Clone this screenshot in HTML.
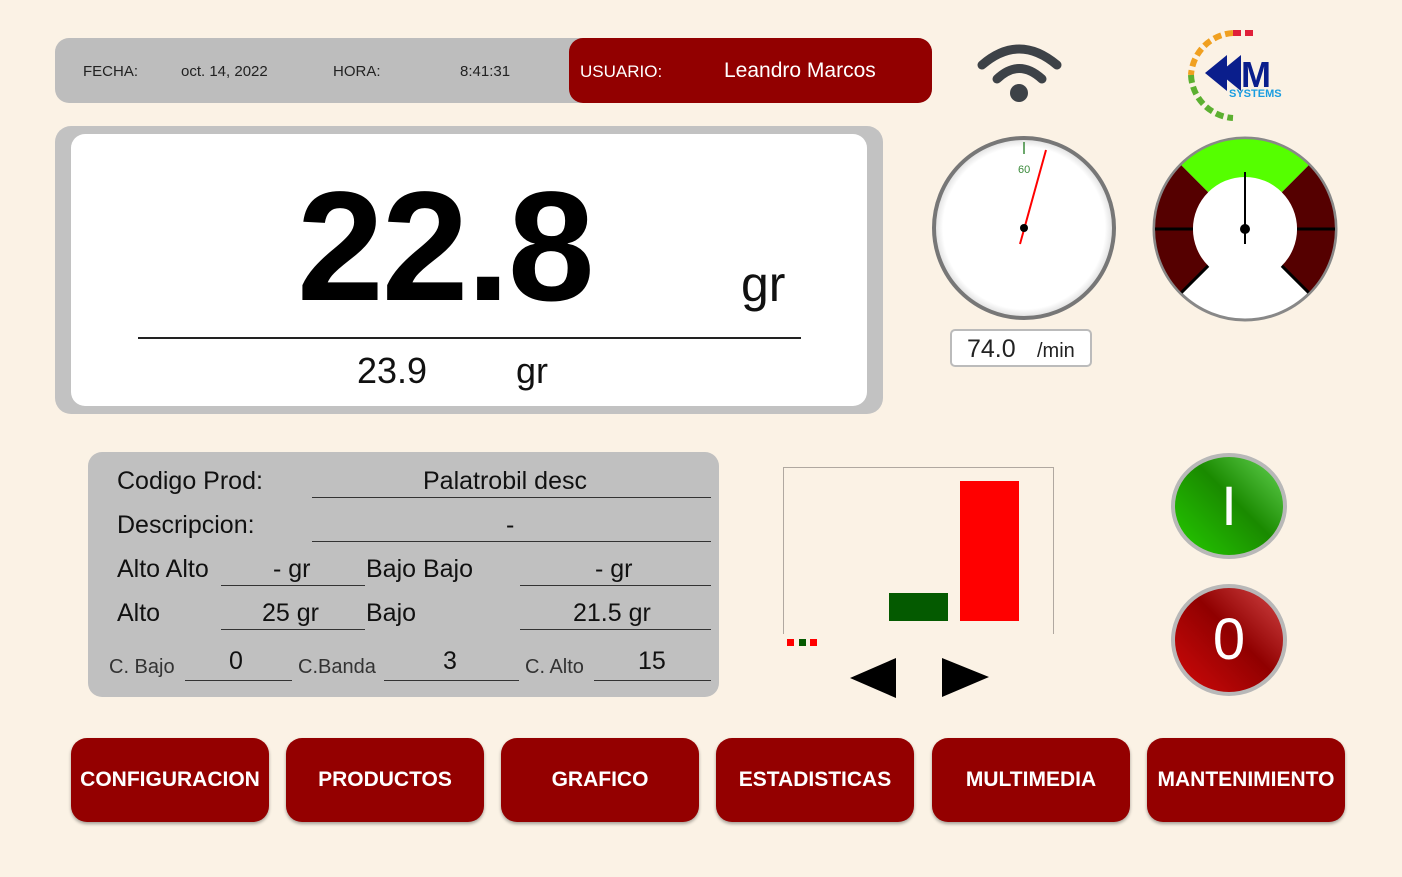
<!DOCTYPE html><html><head><style>
body{margin:0;width:1402px;height:877px;background:#fbf2e5;font-family:"Liberation Sans",Roboto,sans-serif;position:relative;overflow:hidden}
.a{position:absolute}
.btn{position:absolute;top:738px;width:198px;height:84px;background:#940000;border-radius:16px;color:#fff;font-size:21px;font-weight:bold;display:flex;align-items:center;justify-content:center;box-shadow:0 2px 3px rgba(0,0,0,.35)}
.t{position:absolute;font-size:25px;color:#111}
.l{position:absolute;height:1px;background:#333}
</style></head><body>
<div class="a" style="left:55px;top:38px;width:877px;height:65px;background:#bdbdbd;border-radius:14px"></div>
<div class="a" style="left:569px;top:38px;width:363px;height:65px;background:#920000;border-radius:14px"></div>
<div class="a" style="left:83px;top:63px;font-size:15px;color:#222">FECHA:</div>
<div class="a" style="left:181px;top:63px;font-size:15px;color:#222">oct. 14, 2022</div>
<div class="a" style="left:333px;top:63px;font-size:15px;color:#222">HORA:</div>
<div class="a" style="left:460px;top:63px;font-size:15px;color:#222">8:41:31</div>
<div class="a" style="left:580px;top:62px;font-size:17px;color:#fff">USUARIO:</div>
<div class="a" style="left:724px;top:59px;font-size:21px;color:#fff">Leandro Marcos</div>
<svg class="a" style="left:975px;top:35px" width="90" height="70"><g fill="none" stroke="#3d4247" stroke-width="9" stroke-linecap="round"><path d="M7 30 Q44 -2 82 30"/><path d="M22 44 Q44 23 67 44"/></g><circle cx="44" cy="58" r="9" fill="#3d4247"/></svg>
<svg class="a" style="left:1185px;top:25px" width="110" height="100"><g fill="none" stroke-width="6"><path d="M48 8 A45 45 0 0 0 6 50" stroke="#f0a020" stroke-dasharray="8 4"/><path d="M6 50 A45 45 0 0 0 48 93" stroke="#5cb030" stroke-dasharray="8 4"/><path d="M48 8 L72 8" stroke="#e0203a" stroke-dasharray="8 4"/></g><polygon points="20,48 42,30 42,66" fill="#0a1e8c"/><polygon points="34,48 56,30 56,66" fill="#0a1e8c"/><text x="56" y="62" font-size="36" font-weight="bold" fill="#0a1e8c" font-family="Liberation Sans">M</text><text x="44" y="72" font-size="11" font-weight="bold" fill="#1a9de0" font-family="Liberation Sans">SYSTEMS</text></svg>
<div class="a" style="left:55px;top:126px;width:828px;height:288px;background:#c2c2c2;border-radius:16px"></div>
<div class="a" style="left:71px;top:134px;width:796px;height:272px;background:#fff;border-radius:14px"></div>
<div class="a" style="left:297px;top:162px;font-size:156px;font-weight:bold;color:#000;line-height:170px;letter-spacing:-2px">22.8</div>
<div class="a" style="left:741px;top:255px;font-size:50px;color:#111">gr</div>
<div class="a" style="left:138px;top:337px;width:663px;height:2px;background:#222"></div>
<div class="a" style="left:357px;top:350px;font-size:36px;color:#111">23.9</div>
<div class="a" style="left:516px;top:350px;font-size:36px;color:#111">gr</div>
<svg class="a" style="left:930px;top:134px" width="190" height="190"><defs><radialGradient id="g1"><stop offset="0.9" stop-color="#fff"/><stop offset="1" stop-color="#ddd"/></radialGradient></defs><circle cx="94" cy="94" r="90" fill="url(#g1)" stroke="#777" stroke-width="4"/><g stroke="#3a8a3a" stroke-width="1.5"><line x1="94" y1="8" x2="94" y2="20"/></g><text x="88" y="39" font-size="11" fill="#3a8a3a" font-family="Liberation Sans">60</text><line x1="90" y1="110" x2="116" y2="16" stroke="red" stroke-width="2"/><circle cx="94" cy="94" r="4" fill="#000"/></svg>
<div class="a" style="left:950px;top:329px;width:142px;height:38px;border:2px solid #bbb;border-radius:5px;background:#fff;box-sizing:border-box"></div>
<div class="a" style="left:967px;top:335px;font-size:25px;color:#222">74.0</div>
<div class="a" style="left:1037px;top:340px;font-size:20px;color:#222">/min</div>
<svg class="a" style="left:1150px;top:134px" width="192" height="192">
<circle cx="95" cy="95" r="91" fill="#fff" stroke="#888" stroke-width="3"/>
<path d="M31.4 31.4 A90 90 0 0 1 158.6 31.4 L131.8 58.2 A52 52 0 0 0 58.2 58.2Z" fill="#55ff00"/>
<path d="M31.4 31.4 A90 90 0 0 0 31.4 158.6 L58.2 131.8 A52 52 0 0 1 58.2 58.2Z" fill="#550000"/>
<path d="M158.6 31.4 A90 90 0 0 1 158.6 158.6 L131.8 131.8 A52 52 0 0 0 131.8 58.2Z" fill="#550000"/>
<line x1="5" y1="95" x2="43" y2="95" stroke="#000" stroke-width="3"/><line x1="147" y1="95" x2="185" y2="95" stroke="#000" stroke-width="3"/>
<line x1="31.4" y1="158.6" x2="58.2" y2="131.8" stroke="#000" stroke-width="3"/><line x1="158.6" y1="158.6" x2="131.8" y2="131.8" stroke="#000" stroke-width="3"/>
<line x1="95" y1="38" x2="95" y2="110" stroke="#000" stroke-width="2"/><circle cx="95" cy="95" r="5" fill="#000"/></svg>
<div class="a" style="left:88px;top:452px;width:631px;height:245px;background:#c0c0c0;border-radius:14px"></div>
<div class="t" style="left:117px;top:467px">Codigo Prod:</div>
<div class="t" style="left:423px;top:467px">Palatrobil desc</div>
<div class="l" style="left:312px;top:497px;width:399px"></div>
<div class="t" style="left:117px;top:511px">Descripcion:</div>
<div class="t" style="left:506px;top:511px">-</div>
<div class="l" style="left:312px;top:541px;width:399px"></div>
<div class="t" style="left:117px;top:555px">Alto Alto</div>
<div class="t" style="left:273px;top:555px">- gr</div>
<div class="l" style="left:221px;top:585px;width:144px"></div>
<div class="t" style="left:366px;top:555px">Bajo Bajo</div>
<div class="t" style="left:595px;top:555px">- gr</div>
<div class="l" style="left:520px;top:585px;width:191px"></div>
<div class="t" style="left:117px;top:599px">Alto</div>
<div class="t" style="left:262px;top:599px">25 gr</div>
<div class="l" style="left:221px;top:629px;width:144px"></div>
<div class="t" style="left:366px;top:599px">Bajo</div>
<div class="t" style="left:573px;top:599px">21.5 gr</div>
<div class="l" style="left:520px;top:629px;width:191px"></div>
<div class="a" style="left:109px;top:656px;font-size:20px;color:#333">C. Bajo</div>
<div class="t" style="left:229px;top:647px">0</div>
<div class="l" style="left:185px;top:680px;width:107px"></div>
<div class="a" style="left:298px;top:656px;font-size:20px;color:#333">C.Banda</div>
<div class="t" style="left:443px;top:647px">3</div>
<div class="l" style="left:384px;top:680px;width:135px"></div>
<div class="a" style="left:525px;top:656px;font-size:20px;color:#333">C. Alto</div>
<div class="t" style="left:638px;top:647px">15</div>
<div class="l" style="left:594px;top:680px;width:117px"></div>
<div class="a" style="left:783px;top:467px;width:271px;height:167px;border:1px solid #b0a8a0;border-bottom:none;box-sizing:border-box"></div>
<div class="a" style="left:889px;top:593px;width:59px;height:28px;background:#045a00"></div>
<div class="a" style="left:960px;top:481px;width:59px;height:140px;background:#ff0000"></div>
<div class="a" style="left:787px;top:639px;width:7px;height:7px;background:red"></div>
<div class="a" style="left:799px;top:639px;width:7px;height:7px;background:#045a00"></div>
<div class="a" style="left:810px;top:639px;width:7px;height:7px;background:red"></div>
<svg class="a" style="left:850px;top:658px" width="140" height="42"><polygon points="0,20 46,0 46,40" fill="#000"/><polygon points="92,0 139,19 92,39" fill="#000"/></svg>
<div class="a" style="left:1171px;top:453px;width:116px;height:106px;border-radius:50%;background:linear-gradient(225deg,#66d455,#1a8a00 45%,#25cc00);border:4px solid #b8b8b8;box-sizing:border-box;color:#fff;font-size:56px;text-align:center;line-height:98px">I</div>
<div class="a" style="left:1171px;top:584px;width:116px;height:112px;border-radius:50%;background:linear-gradient(225deg,#d44848,#900000 45%,#d00a0a);border:4px solid #b8b8b8;box-sizing:border-box;color:#fff;font-size:58px;text-align:center;line-height:104px">0</div>
<div class="btn" style="left:71px">CONFIGURACION</div>
<div class="btn" style="left:286px">PRODUCTOS</div>
<div class="btn" style="left:501px">GRAFICO</div>
<div class="btn" style="left:716px">ESTADISTICAS</div>
<div class="btn" style="left:932px">MULTIMEDIA</div>
<div class="btn" style="left:1147px">MANTENIMIENTO</div>
</body></html>
